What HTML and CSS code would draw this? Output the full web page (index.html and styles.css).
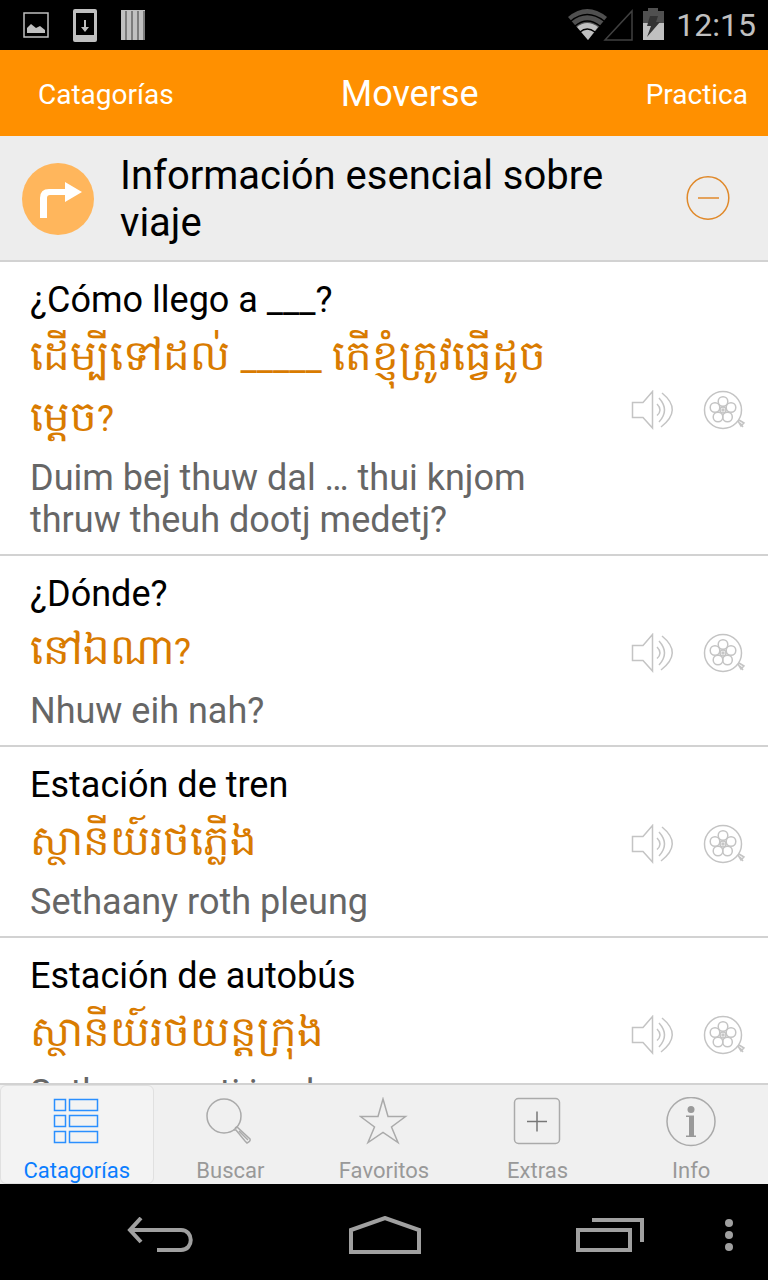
FILE: index.html
```html
<!DOCTYPE html>
<html lang="es">
<head>
  <meta charset="UTF-8" />
  <meta name="viewport" content="width=device-width, initial-scale=1" />
  <title>Moverse</title>
  <link rel="stylesheet" href="styles.css">
</head>
<body>
  <!-- shared icons -->
  <svg class="sprite" aria-hidden="true">
    <symbol id="speaker" viewBox="0 0 44 40">
      <path d="M1.5 12.5H12L21.5 1.5V38L12 27.5H1.5Z" />
      <path d="M26 14Q32 20 26 25.500M28 8Q39 20 28 32M31 3Q52 20 30 37" />
    </symbol>
    <symbol id="reel" viewBox="0 0 44 40">
      <circle cx="20" cy="20" r="18.500" />
      <circle cx="20" cy="11.500" r="4.800" />
      <circle cx="28" cy="17.500" r="4.800" />
      <circle cx="24.500" cy="27" r="4.800" />
      <circle cx="15" cy="27" r="4.800" />
      <circle cx="12" cy="17.500" r="4.800" />
      <circle cx="20" cy="20" r="3" />
      <circle cx="20" cy="20" r="1" />
      <path d="M35 31L38 36L41 33L36 30M37 33L40 37" />
    </symbol>
  </svg>

  <div class="status">
    <svg width="26" height="26" viewBox="0 0 26 26">
      <rect x="1" y="1" width="24" height="24" fill="none" stroke="#c0c0c0" stroke-width="1.500" />
      <path d="M4 21V16L8 12L13 16L17 14L22 18V21Z" fill="#c0c0c0" />
    </svg>
    <svg width="24" height="33" viewBox="0 0 24 33">
      <path fill="#c0c0c0" fill-rule="evenodd" d="M2 0H22Q24 0 24 2V31Q24 33 22 33H2Q0 33 0 31V2Q0 0 2 0ZM3 4V26H21V4Z" />
      <path d="M11 11H13V18H16L12 23L8 18H11Z" fill="#c0c0c0" />
    </svg>
    <svg width="24" height="30" viewBox="0 0 24 30">
      <path d="M0 0H24V30H0Z" fill="#c0c0c0" />
      <path d="M5 1V30M11 1V30M17 1V30M23 1V30" stroke="#666" stroke-width="1.500" />
    </svg>
    <div class="status-right">
      <svg width="96" height="34" viewBox="0 0 96 34">
        <path d="M0 9Q19 -7 39 9L20 32Z" fill="#505050" />
        <path d="M9 19Q19 11 30 19L20 32Z" fill="#c0c0c0" />
        <path d="M3 13Q19 0 36 13M7 18Q19 8 32 18M12 24Q19 18 27 24" fill="none" stroke="#000" stroke-width="1.500" />
        <path d="M37 32L64 3V32Z" fill="none" stroke="#404040" stroke-width="1.500" />
        <path d="M75 3H80V0H90V3H96V32H75Z" fill="#505050" />
        <path d="M75 15H96V32H75Z" fill="#c0c0c0" />
        <path d="M82 8H90L88 14H92L79 29L83 18H79Z" fill="#333" />
      </svg>
      <span>12:15</span>
    </div>
  </div>

  <header class="header">
    <a href="#">Catagorías</a>
    <h1>Moverse</h1>
    <a href="#">Practica</a>
  </header>

  <div class="section">
    <svg width="72" height="72" viewBox="0 0 72 72">
      <circle cx="36" cy="36" r="36" fill="#ffb65c" />
      <path d="M18 55V35Q18 26 27 26H43V19L60 29L43 39V32H28Q25 32 25 35V55Z" fill="#fff" />
    </svg>
    <h2>Información esencial sobre viaje</h2>
    <button class="collapse" aria-label="Contraer">
      <svg width="44" height="46" viewBox="0 0 44 46" fill="none" stroke="#e0892a" stroke-width="1.500">
        <ellipse cx="22" cy="22" rx="20.800" ry="21.200" />
        <path d="M12 22H33" />
      </svg>
    </button>
  </div>

  <main class="phrases">
    <article class="phrase">
      <div class="text">
        <p class="spanish">¿Cómo llego a ___?</p>
        <p class="khmer" lang="km">ដើម្បីទៅដល់ <span class="latin">_____</span> តើខ្ញុំត្រូវធ្វើដូច<wbr>ម្តេច<span class="latin">?</span></p>
        <p class="sound">Duim bej thuw dal … thui knjom thruw theuh dootj medetj?</p>
      </div>
      <button aria-label="Escuchar"><svg><use href="#speaker" /></svg></button>
      <button aria-label="Video"><svg><use href="#reel" /></svg></button>
    </article>
    <article class="phrase">
      <div class="text">
        <p class="spanish">¿Dónde?</p>
        <p class="khmer" lang="km">នៅឯណា<span class="latin">?</span></p>
        <p class="sound">Nhuw eih nah?</p>
      </div>
      <button aria-label="Escuchar"><svg><use href="#speaker" /></svg></button>
      <button aria-label="Video"><svg><use href="#reel" /></svg></button>
    </article>
    <article class="phrase">
      <div class="text">
        <p class="spanish">Estación de tren</p>
        <p class="khmer" lang="km">ស្ថានីយ៍រថភ្លើង</p>
        <p class="sound">Sethaany roth pleung</p>
      </div>
      <button aria-label="Escuchar"><svg><use href="#speaker" /></svg></button>
      <button aria-label="Video"><svg><use href="#reel" /></svg></button>
    </article>
    <article class="phrase">
      <div class="text">
        <p class="spanish">Estación de autobús</p>
        <p class="khmer" lang="km">ស្ថានីយ៍រថយន្តក្រុង</p>
        <p class="sound">Sethaany roti jan krong</p>
      </div>
      <button aria-label="Escuchar"><svg><use href="#speaker" /></svg></button>
      <button aria-label="Video"><svg><use href="#reel" /></svg></button>
    </article>
  </main>

  <nav class="tabs">
    <a href="#" class="active">
      <svg viewBox="0 0 50 50">
        <path d="M2.500 2.500H13.500V13.500H2.500ZM17.500 2.500H45.500V13.500H17.500ZM2.500 18.500H13.500V29.500H2.500ZM17.500 18.500H45.500V29.500H17.500ZM2.500 34.500H13.500V45.500H2.500ZM17.500 34.500H45.500V45.500H17.500Z" />
      </svg>
      Catagorías
    </a>
    <a href="#">
      <svg viewBox="0 0 50 50">
        <circle cx="19" cy="19" r="17" />
        <path d="M30 31L32 30L45 42Q46 44 42 46L40 44L31 33L29 33M34 34L43 43" />
      </svg>
      Buscar
    </a>
    <a href="#">
      <svg viewBox="0 0 50 50">
        <path d="M24 2L29 19.500H46.500L32.500 30L39 45.500L24 35.500L9 45.500L15.500 30L1.500 19.500H19Z" />
      </svg>
      Favoritos
    </a>
    <a href="#">
      <svg viewBox="0 0 50 50">
        <rect x="1.500" y="1.500" width="45" height="45" rx="4" />
        <path d="M14 24.500H34M24 14.500V34.500" stroke="#777" />
      </svg>
      Extras
    </a>
    <a href="#">
      <svg viewBox="0 0 50 50">
        <circle cx="25" cy="24.500" r="24" />
        <circle cx="25" cy="12.500" r="3.500" fill="#999" stroke="none" />
        <path d="M20 18.500H28V38.500H30V40H20V38.500H23V20H20Z" fill="#999" stroke="none" />
      </svg>
      Info
    </a>
  </nav>

  <div class="system">
    <button aria-label="Atrás">
      <svg width="68" height="36" viewBox="0 0 68 36">
        <path d="M15 1L4 13L15 25M4 13H55C68 13 68 33 55 33H31" />
      </svg>
    </button>
    <button aria-label="Inicio">
      <svg width="72" height="38" viewBox="0 0 72 38">
        <path d="M2 36V14L36 2L70 14V36Z" />
      </svg>
    </button>
    <button aria-label="Recientes">
      <svg width="68" height="34" viewBox="0 0 68 34">
        <path d="M16 2H66V24M2 12H54V32H2Z" />
      </svg>
    </button>
    <button aria-label="Más">
      <svg width="8" height="34" viewBox="0 0 8 34">
        <g fill="#a0a0a0" stroke="none">
          <circle cx="4" cy="5" r="4" />
          <circle cx="4" cy="17" r="4" />
          <circle cx="4" cy="29" r="4" />
        </g>
      </svg>
    </button>
  </div>
</body>
</html>
```
FILE: styles.css
```css
* {
  box-sizing: border-box;
}

body {
  margin: 0;
  height: 100vh;
  display: flex;
  flex-direction: column;
  background: #fff;
  font-family: Roboto, "Noto Sans", sans-serif;
  color: #000;
  overflow: hidden;
}

h1, h2, p {
  margin: 0;
  font-weight: 400;
}

a {
  color: inherit;
  text-decoration: none;
}

button {
  padding: 0;
  border: none;
  background: none;
  cursor: pointer;
}

svg {
  display: block;
  flex-shrink: 0;
}

.sprite {
  position: absolute;
  width: 0;
  height: 0;
}

.status {
  flex-shrink: 0;
  display: flex;
  align-items: center;
  gap: 24px;
  height: 50px;
  padding: 0 12px 0 23px;
  background: #000;
  color: #c0c0c0;
  font-size: 32px;
}

.status-right {
  display: flex;
  align-items: center;
  gap: 12px;
  margin-left: auto;
}

.header {
  flex-shrink: 0;
  display: flex;
  justify-content: space-between;
  align-items: center;
  height: 86px;
  padding: 2px 20px 0 38px;
  background: #ff9000;
  color: #fff;
  font-size: 28px;
}

.header h1 {
  font-size: 36px;
}

.section {
  flex-shrink: 0;
  display: flex;
  align-items: center;
  padding: 16px 38px 14px 22px;
  background: #ededed;
  border-bottom: 2px solid #d2d2d2;
}

.section h2 {
  flex: 1;
  padding: 0 60px 0 26px;
  font-size: 40px;
  line-height: 47px;
}

.phrases {
  flex: 1;
  min-height: 0;
  overflow-y: auto;
  scrollbar-width: none;
}

.phrase {
  display: flex;
  align-items: center;
  gap: 28px;
  padding: 17px 21px 13px 30px;
  border-bottom: 2px solid #d2d2d2;
  font-size: 36px;
  line-height: 42px;
}

.phrase .text {
  flex: 1;
  padding-right: 20px;
}

.phrase svg {
  width: 44px;
  height: 40px;
  fill: none;
  stroke: #c4c4c4;
  stroke-width: 1.5;
}

.khmer {
  padding: 4px 0 10px;
  color: #d97b00;
  font-size: 42px;
  line-height: 61px;
}

.khmer .latin {
  font-size: 36px;
  line-height: 36px;
}

.sound {
  color: #666;
}

.tabs {
  flex-shrink: 0;
  display: grid;
  grid-template-columns: repeat(5, 1fr);
  border-top: 2px solid #d2d2d2;
  background: #f0f0f0;
}

.tabs a {
  display: flex;
  flex-direction: column;
  align-items: center;
  gap: 11px;
  padding-top: 11px;
  border: 1px solid transparent;
  color: #999;
  font-size: 22px;
  line-height: 25px;
}

.tabs svg {
  width: 50px;
  height: 50px;
  fill: none;
  stroke: #aaa;
  stroke-width: 1.5;
}

.tabs .active {
  border-color: #e0e0e0;
  border-radius: 6px;
  background: #f3f3f3;
  color: #0a7dff;
}

.tabs .active svg {
  stroke: #2a8fff;
}

.system {
  flex-shrink: 0;
  display: grid;
  grid-template-columns: repeat(3, 1fr) 14px;
  align-items: center;
  height: 96px;
  padding: 5px 32px 0 48px;
  background: #000;
}

.system button {
  display: flex;
  justify-content: center;
}

.system svg {
  fill: none;
  stroke: #a0a0a0;
  stroke-width: 4;
}
```
